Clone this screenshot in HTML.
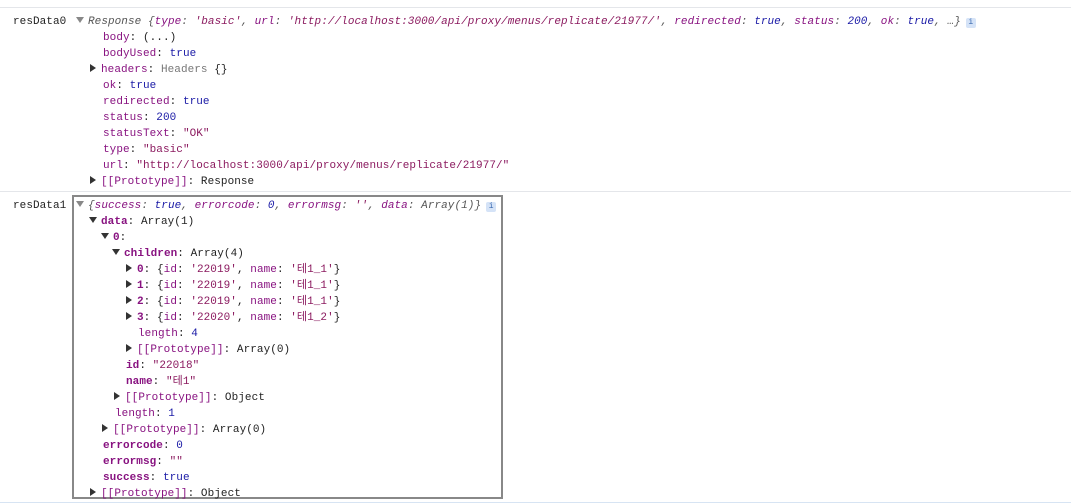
<!DOCTYPE html>
<html><head><meta charset="utf-8"><style>
html,body{margin:0;padding:0;background:#fff;width:1071px;height:504px;overflow:hidden}
body{font-family:"Liberation Mono","Noto Sans CJK KR",monospace;font-size:11px;color:#222;position:relative}
.w{position:absolute;left:0;top:2px;width:1071px;height:504px}
.l{position:absolute;height:16px;line-height:16px;white-space:pre;letter-spacing:0.06px}
.k{color:#881280}.b{font-weight:bold}
.n{color:#1a1aa6}.s{color:#8b1a5f}.g{color:#777}
.i{font-style:italic;color:#555}
.t{display:inline-block;width:0;height:0;border-left:6px solid #333;border-top:4px solid transparent;border-bottom:4px solid transparent;vertical-align:0;margin-right:5px}
.d{display:inline-block;width:0;height:0;border-top:6px solid #333;border-left:4px solid transparent;border-right:4px solid transparent;vertical-align:1px;margin-right:4px}
.sep{position:absolute;left:0;width:1071px;height:1px;background:#e4e6ea}
.info{display:inline-block;width:10px;height:10px;background:#d5e3f7;color:#3c6bb0;font-size:8px;line-height:10px;text-align:center;border-radius:2px;vertical-align:0;margin-left:5px;font-style:normal}
</style></head><body>
<div class="sep" style="top:7px"></div>
<div class="sep" style="top:191px"></div>
<div class="sep" style="top:502px;background:#d7e4f3"></div>
<div style="position:absolute;left:72px;top:195px;width:427px;height:300px;border:2px solid #888"></div>
<div class="w">
<div class="l" style="left:13px;top:12px">resData0</div>
<div class="l i" style="left:76px;top:12px"><span class="d" style="border-top-color:#888"></span>Response {<span class="k">type</span>: <span class="s">'basic'</span>, <span class="k">url</span>: <span class="s">'http://localhost:3000/api/proxy/menus/replicate/21977/'</span>, <span class="k">redirected</span>: <span class="n">true</span>, <span class="k">status</span>: <span class="n">200</span>, <span class="k">ok</span>: <span class="n">true</span>, …}<span class="info">i</span></div>
<div class="l" style="left:103px;top:28px"><span class="k">body</span>: (...)</div>
<div class="l" style="left:103px;top:44px"><span class="k">bodyUsed</span>: <span class="n">true</span></div>
<div class="l" style="left:90px;top:60px"><span class="t"></span><span class="k">headers</span>: <span class="g">Headers</span> {}</div>
<div class="l" style="left:103px;top:76px"><span class="k">ok</span>: <span class="n">true</span></div>
<div class="l" style="left:103px;top:92px"><span class="k">redirected</span>: <span class="n">true</span></div>
<div class="l" style="left:103px;top:108px"><span class="k">status</span>: <span class="n">200</span></div>
<div class="l" style="left:103px;top:124px"><span class="k">statusText</span>: <span class="s">"OK"</span></div>
<div class="l" style="left:103px;top:140px"><span class="k">type</span>: <span class="s">"basic"</span></div>
<div class="l" style="left:103px;top:156px"><span class="k">url</span>: <span class="s">"http://localhost:3000/api/proxy/menus/replicate/21977/"</span></div>
<div class="l" style="left:90px;top:172px"><span class="t"></span><span class="k">[[Prototype]]</span>: Response</div>

<div class="l" style="left:13px;top:196px">resData1</div>
<div class="l i" style="left:76px;top:196px"><span class="d" style="border-top-color:#888"></span>{<span class="k">success</span>: <span class="n">true</span>, <span class="k">errorcode</span>: <span class="n">0</span>, <span class="k">errormsg</span>: <span class="s">''</span>, <span class="k">data</span>: Array(1)}<span class="info">i</span></div>
<div class="l" style="left:89px;top:212px"><span class="d"></span><span class="k b">data</span>: Array(1)</div>
<div class="l" style="left:101px;top:228px"><span class="d"></span><span class="k b">0</span>:</div>
<div class="l" style="left:112px;top:244px"><span class="d"></span><span class="k b">children</span>: Array(4)</div>
<div class="l" style="left:126px;top:260px"><span class="t"></span><span class="k b">0</span>: {<span class="k">id</span>: <span class="s">'22019'</span>, <span class="k">name</span>: <span class="s">'테1_1'</span>}</div>
<div class="l" style="left:126px;top:276px"><span class="t"></span><span class="k b">1</span>: {<span class="k">id</span>: <span class="s">'22019'</span>, <span class="k">name</span>: <span class="s">'테1_1'</span>}</div>
<div class="l" style="left:126px;top:292px"><span class="t"></span><span class="k b">2</span>: {<span class="k">id</span>: <span class="s">'22019'</span>, <span class="k">name</span>: <span class="s">'테1_1'</span>}</div>
<div class="l" style="left:126px;top:308px"><span class="t"></span><span class="k b">3</span>: {<span class="k">id</span>: <span class="s">'22020'</span>, <span class="k">name</span>: <span class="s">'테1_2'</span>}</div>
<div class="l" style="left:138px;top:324px"><span class="k">length</span>: <span class="n">4</span></div>
<div class="l" style="left:126px;top:340px"><span class="t"></span><span class="k">[[Prototype]]</span>: Array(0)</div>
<div class="l" style="left:126px;top:356px"><span class="k b">id</span>: <span class="s">"22018"</span></div>
<div class="l" style="left:126px;top:372px"><span class="k b">name</span>: <span class="s">"테1"</span></div>
<div class="l" style="left:114px;top:388px"><span class="t"></span><span class="k">[[Prototype]]</span>: Object</div>
<div class="l" style="left:115px;top:404px"><span class="k">length</span>: <span class="n">1</span></div>
<div class="l" style="left:102px;top:420px"><span class="t"></span><span class="k">[[Prototype]]</span>: Array(0)</div>
<div class="l" style="left:103px;top:436px"><span class="k b">errorcode</span>: <span class="n">0</span></div>
<div class="l" style="left:103px;top:452px"><span class="k b">errormsg</span>: <span class="s">""</span></div>
<div class="l" style="left:103px;top:468px"><span class="k b">success</span>: <span class="n">true</span></div>
<div class="l" style="left:90px;top:484px"><span class="t"></span><span class="k">[[Prototype]]</span>: Object</div>
</div>
</body></html>
